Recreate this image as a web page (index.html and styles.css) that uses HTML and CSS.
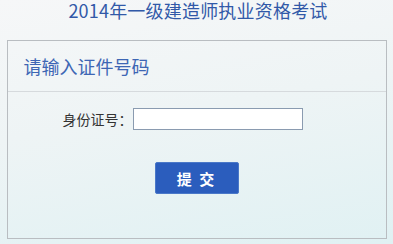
FILE: index.html
```html
<!DOCTYPE html>
<html lang="zh-CN">
<head>
<meta charset="utf-8">
<title>2014年一级建造师执业资格考试</title>
<link rel="stylesheet" href="styles.css">
</head>
<body>
<div class="page">
  <h1 class="title">2014年一级建造师执业资格考试</h1>
  <div class="panel">
    <div class="panel-head">请输入证件号码</div>
    <form class="panel-body">
      <div class="row">
        <label class="label" for="idno">身份证号：</label>
        <input class="field" id="idno" type="text">
      </div>
      <div class="actions">
        <button class="submit" type="button">提&nbsp;交</button>
      </div>
    </form>
  </div>
</div>
</body>
</html>
```
FILE: styles.css
```css
html, body {
  margin: 0;
  padding: 0;
}
body {
  width: 393px;
  height: 244px;
  overflow: hidden;
  background: linear-gradient(170deg, #f6f7f8 0%, #eef4f5 45%, #e0f1f3 100%);
  font-family: "Noto Sans CJK SC", "Noto Sans", sans-serif;
}
.page {
  display: flex;
  flex-direction: column;
  align-items: center;
}
.title {
  margin: 0;
  height: 39px;
  font-size: 18px;
  line-height: 20px;
  font-weight: normal;
  color: #3159a8;
  padding-left: 3px;
  letter-spacing: 0.2px;
}
.panel {
  width: 378px;
  height: 197px;
  border: 1px solid #b9bdc1;
  margin-top: 1px;
  display: flex;
  flex-direction: column;
}
.panel-head {
  height: 51px;
  border-bottom: 1px solid #d6dadd;
  box-sizing: border-box;
  padding-left: 16px;
  font-size: 18px;
  line-height: 50px;
  color: #3d66b4;
}
.panel-body {
  margin: 0;
  display: flex;
  flex-direction: column;
}
.row {
  display: flex;
  align-items: center;
  margin-top: 16px;
  padding-left: 55px;
  gap: 6px;
}
.label {
  font-size: 14px;
  color: #333;
  width: 64px;
  white-space: nowrap;
}
.field {
  width: 170px;
  height: 22px;
  box-sizing: border-box;
  border: 1px solid #8a9bb0;
  background: #fff;
  margin: 0;
  padding: 0 4px;
}
.actions {
  display: flex;
  padding-left: 147px;
  margin-top: 32px;
}
.submit {
  width: 84px;
  height: 32px;
  border: 1px solid #4a78c8;
  border-radius: 2px;
  background: #2b5dbd;
  color: #fff;
  font-family: "Noto Sans CJK SC", sans-serif;
  font-size: 15px;
  font-weight: bold;
  letter-spacing: 2px;
  padding: 0;
}
```
